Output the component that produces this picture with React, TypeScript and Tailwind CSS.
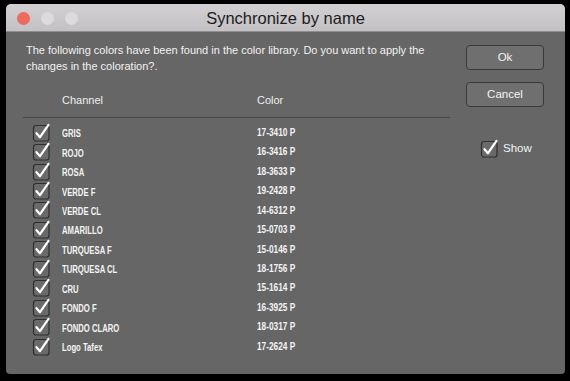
const rows = [
  ["GRIS", "17-3410 P"],
  ["ROJO", "16-3416 P"],
  ["ROSA", "18-3633 P"],
  ["VERDE F", "19-2428 P"],
  ["VERDE CL", "14-6312 P"],
  ["AMARILLO", "15-0703 P"],
  ["TURQUESA F", "15-0146 P"],
  ["TURQUESA CL", "18-1756 P"],
  ["CRU", "15-1614 P"],
  ["FONDO F", "16-3925 P"],
  ["FONDO CLARO", "18-0317 P"],
  ["Logo Tafex", "17-2624 P"],
];

function Check() {
  return (
    <svg width="19" height="19" viewBox="0 0 19 19" className="shrink-0">
      <rect x="1.5" y="2.5" width="15.5" height="15.5" rx="2.5" fill="#6a6a6a" stroke="#2e2e2e" strokeWidth="1.2" />
      <path d="M4.5 10.2 L8 14.2 L16.5 1.8" fill="none" stroke="#ffffff" strokeWidth="2.2" strokeLinecap="round" strokeLinejoin="round" />
    </svg>
  );
}

export default function App() {
  return (
    <div className="w-[570px] h-[381px] bg-black pt-[4px] pl-[6px] pr-[5px] pb-[7px]" style={{ fontFamily: '"Liberation Sans", Arial, sans-serif' }}>
      <div className="w-full h-full flex flex-col rounded-t-[5px] rounded-b-[4px] overflow-hidden bg-[#666666]">
        {/* title bar */}
        <div className="h-[28px] shrink-0 relative flex items-center justify-center bg-gradient-to-b from-[#d2d0d2] to-[#c3c1c3] border-b border-[#8e8e8e]">
          <div className="absolute left-[11px] top-[8px] flex gap-[11px]">
            <span className="w-[13px] h-[13px] rounded-full bg-[#ee6a5f]" />
            <span className="w-[13px] h-[13px] rounded-full bg-[#dcdadc]" />
            <span className="w-[13px] h-[13px] rounded-full bg-[#dcdadc]" />
          </div>
          <span className="text-[16.5px] text-[#1c1c1c] mt-[1px]">Synchronize by name</span>
        </div>

        {/* body */}
        <div className="flex flex-1">
          <div className="w-[444px] pl-[20px] pt-[10px]">
            <p className="text-[11px] leading-[16px] text-[#f2f2f2] pr-[6px]">
              The following colors have been found in the color library. Do you want to apply the changes in the coloration?.
            </p>
            <div className="ml-[-3px] mt-[18px] border-b border-[#464646] flex text-[11px] text-[#eeeeee] pb-[8px]">
              <span className="ml-[39px] w-[195px]">Channel</span>
              <span>Color</span>
            </div>
            <div className="mt-[5px]">
              {rows.map(([name, code]) => (
                <div key={name} className="h-[19.45px] flex items-center">
                  <div className="ml-[6px] w-[30px]"><Check /></div>
                  <div className="w-[195px] leading-none">
                    <span className="inline-block origin-left scale-x-[0.7] text-[11px] font-bold text-[#f4f4f4]">{name}</span>
                  </div>
                  <span className="inline-block leading-none origin-left scale-x-[0.79] text-[10.5px] font-bold text-[#f4f4f4]">{code}</span>
                </div>
              ))}
            </div>
          </div>

          <div className="flex-1 pt-[13px] pl-[16px]">
            <div className="w-[78px] h-[25px] rounded-[4px] border border-[#3a3a3a] bg-[#6f6f6f] flex items-center justify-center text-[11.5px] text-[#f4f4f4]">Ok</div>
            <div className="mt-[12px] w-[78px] h-[25px] rounded-[4px] border border-[#3a3a3a] bg-[#6f6f6f] flex items-center justify-center text-[11.5px] text-[#f4f4f4]">Cancel</div>
            <div className="mt-[32px] ml-[14px] flex items-center gap-[4px]">
              <Check />
              <span className="text-[11.5px] text-[#f4f4f4]">Show</span>
            </div>
          </div>
        </div>
      </div>
    </div>
  );
}
